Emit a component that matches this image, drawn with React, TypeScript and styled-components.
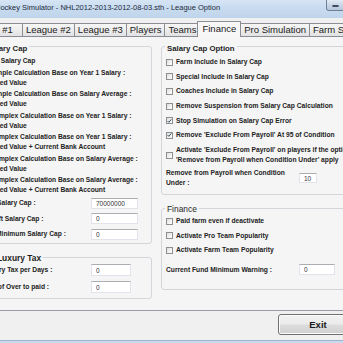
import React from 'react';
import styled, { createGlobalStyle, css } from 'styled-components';

const GlobalStyle = createGlobalStyle`
  html, body {
    margin: 0;
    padding: 0;
    background: #f0f0f0;
  }
  body {
    font-family: "Liberation Sans", Arial, sans-serif;
    color: #1e1e1e;
  }
  * {
    box-sizing: border-box;
  }
`;

const Window = styled.div`
  width: 343px;
  height: 343px;
  overflow: hidden;
  display: flex;
  flex-direction: column;
  background: #f0f0f0;
`;

const TitleBar = styled.div`
  flex: none;
  height: 18px;
  display: flex;
  justify-content: space-between;
  align-items: flex-start;
  background: linear-gradient(180deg, #d6e5f5 0%, #c8dbef 45%, #bfd4eb 100%);
`;

const Title = styled.span`
  margin-left: -5px;
  font-size: 7.5px;
  line-height: 16px;
  color: #1c2a3c;
  white-space: nowrap;
`;

const MinButton = styled.div`
  flex: none;
  width: 24px;
  height: 11px;
  margin-right: -7px;
  border: 1px solid #6f8198;
  border-top: none;
  border-radius: 0 0 3px 3px;
  background: linear-gradient(180deg, #e3ebf5 0%, #c9d6e6 50%, #b7c8dc 100%);
  display: flex;
  align-items: center;
  padding-left: 5px;
`;

const MinDash = styled.div`
  width: 7px;
  height: 2px;
  margin-top: 2px;
  background: #fff;
  border: 1px solid #3b4a5e;
  border-radius: 1px;
`;

const TabStrip = styled.div`
  flex: none;
  height: 15px;
  margin-top: 3px;
  margin-left: -36px;
  display: flex;
  align-items: flex-end;
`;

const Tab = styled.div<{ $active?: boolean }>`
  flex: none;
  height: 13px;
  padding: 0 3px;
  margin-right: -1px;
  border: 1px solid #8c8e94;
  border-bottom: none;
  background: linear-gradient(180deg, #f6f6f6 0%, #ededed 50%, #e2e2e2 100%);
  font-size: 9.5px;
  line-height: 12px;
  color: #1a1a1a;
  white-space: nowrap;
  &:first-child {
    padding-right: 9px;
  }
  ${({ $active }) =>
    $active &&
    css`
      position: relative;
      z-index: 2;
      height: 16px;
      margin: 0 -1px -1px -2px;
      padding: 0 4px;
      line-height: 13px;
      background: #f7f7f7;
    `}
`;

const Panel = styled.div`
  flex: none;
  height: 275px;
  border-top: 1px solid #898c95;
  border-bottom: 1px solid #9a9ca3;
  background: #f5f5f5;
  display: flex;
  align-items: flex-start;
`;

const LeftColumn = styled.div`
  flex: none;
  width: 178px;
  margin-left: -26px;
  display: flex;
  flex-direction: column;
`;

const RightColumn = styled.div`
  flex: none;
  width: 200px;
  margin-left: 9px;
  display: flex;
  flex-direction: column;
`;

const Group = styled.fieldset<{ $top: number; $bottom: number }>`
  margin: ${({ $top }) => $top}px 0 0 0;
  padding: 0 0 ${({ $bottom }) => $bottom}px 0;
  min-width: 0;
  border: 1px solid #d2d6da;
  border-radius: 3px;
  display: flex;
  flex-direction: column;
`;

const Legend = styled.legend<{ $indent: number; $big?: boolean; $bold?: boolean }>`
  margin-left: ${({ $indent }) => $indent}px;
  padding: ${({ $big }) => ($big ? '2px' : '5px')} 2px 0;
  font-size: ${({ $big }) => ($big ? '8.4px' : '7.8px')};
  font-weight: ${({ $bold }) => ($bold ? 700 : 400)};
  line-height: ${({ $big }) => ($big ? '10px' : '9px')};
  color: #1e1e1e;
  white-space: nowrap;
`;

const Stack = styled.div<{ $top: number; $gap: number }>`
  margin-top: ${({ $top }) => $top}px;
  display: flex;
  flex-direction: column;
  gap: ${({ $gap }) => $gap}px;
`;

const OptionRow = styled.div`
  display: flex;
  align-items: center;
  gap: 3px;
  padding-left: 4px;
`;

const RadioDot = styled.span`
  flex: none;
  width: 8px;
  height: 8px;
  border: 1px solid #8e8f8f;
  border-radius: 50%;
  background: linear-gradient(180deg, #e6e6e6, #ffffff);
`;

const Box = styled.span`
  flex: none;
  width: 7px;
  height: 7px;
  border: 1px solid #8e8f8f;
  background: linear-gradient(135deg, #dcdcdc 0%, #f4f4f4 60%, #ffffff 100%);
  display: flex;
  align-items: center;
  justify-content: center;
`;

const Label = styled.span<{ $indent?: number; $width?: number }>`
  margin-left: ${({ $indent }) => $indent ?? 0}px;
  ${({ $width }) => ($width ? `width: ${$width}px;` : 'white-space: nowrap;')}
  font-size: 6.7px;
  font-weight: 700;
  line-height: 10px;
  color: #222;
`;

const FieldRow = styled.div<{ $labelWidth: number; $inputWidth: number; $height: number }>`
  display: grid;
  grid-template-columns: ${({ $labelWidth, $inputWidth }) => `${$labelWidth}px ${$inputWidth}px`};
  align-items: center;
  min-height: ${({ $height }) => $height}px;
`;

const ValueBox = styled.input<{ $h: number }>`
  width: 100%;
  height: ${({ $h }) => $h}px;
  margin: 0;
  padding: 0 0 0 4px;
  border: 1px solid #e2e3ea;
  border-top-color: #abadb3;
  background: #fff;
  font-family: "Liberation Sans", Arial, sans-serif;
  font-size: 6.5px;
  color: #333;
  outline: none;
`;

const Footer = styled.div`
  flex: none;
  height: 29px;
  display: flex;
  justify-content: flex-end;
  align-items: flex-start;
  padding-top: 3px;
  margin-right: -15px;
`;

const Button = styled.button`
  width: 80px;
  height: 21px;
  border: 1px solid #707070;
  border-radius: 3px;
  background: linear-gradient(180deg, #f2f2f2 0%, #ebebeb 48%, #dddddd 52%, #cfcfcf 100%);
  box-shadow: inset 0 0 0 1px #fcfcfc;
  font-family: "Liberation Sans", Arial, sans-serif;
  font-size: 9.5px;
  font-weight: 700;
  color: #1a1a1a;
  padding: 0;
`;

const BottomFrame = styled.div`
  flex: 1;
  border-top: 1px solid #9fb4cc;
  background: #c9daee;
`;

const Check = () => (
  <svg width="6" height="6" viewBox="0 0 6 6">
    <path d="M0.8 3.1 L2.3 4.6 L5.2 1" fill="none" stroke="#2b3a4f" strokeWidth="1.1" />
  </svg>
);

const CheckOption = ({ text, checked, width }: { text: string; checked?: boolean; width?: number }) => (
  <OptionRow>
    <Box>{checked && <Check />}</Box>
    <Label $width={width}>{text}</Label>
  </OptionRow>
);

const RadioOption = ({ children }: { children: React.ReactNode }) => (
  <OptionRow>
    <RadioDot />
    <Label>{children}</Label>
  </OptionRow>
);

const calcOptions = [
  ['Simple Calculation Base on Year 1 Salary :', 'Fixed Value'],
  ['Simple Calculation Base on Salary Average :', 'Fixed Value'],
  ['Complex Calculation Base on Year 1 Salary :', 'Fixed Value'],
  ['Complex Calculation Base on Year 1 Salary :', 'Fixed Value + Current Bank Account'],
  ['Complex Calculation Base on Salary Average :', 'Fixed Value'],
  ['Complex Calculation Base on Salary Average :', 'Fixed Value + Current Bank Account'],
];

const capFields = [
  { label: 'Hard Salary Cap :', indent: 5, value: '70000000' },
  { label: 'Soft Salary Cap :', indent: 15, value: '0' },
  { label: 'Minimum Salary Cap :', indent: 21, value: '0' },
];

const capOptions = [
  { text: 'Farm Include in Salary Cap' },
  { text: 'Special Include in Salary Cap' },
  { text: 'Coaches Include in Salary Cap' },
  { text: 'Remove Suspension from Salary Cap Calculation' },
  { text: 'Stop Simulation on Salary Cap Error', checked: true },
  { text: "Remove 'Exclude From Payroll' At 95 of Condition", checked: true },
];

const financeOptions = ['Paid farm even if deactivate', 'Activate Pro Team Popularity', 'Activate Farm Team Popularity'];

const tabs = ['League #1', 'League #2', 'League #3', 'Players', 'Teams', 'Finance', 'Pro Simulation', 'Farm Simulation'];

export default function App() {
  return (
    <>
      <GlobalStyle />
      <Window>
        <TitleBar>
          <Title>Hockey Simulator - NHL2012-2013-2012-08-03.sth - League Option</Title>
          <MinButton>
            <MinDash />
          </MinButton>
        </TitleBar>

        <TabStrip>
          {tabs.map((t) => (
            <Tab key={t} $active={t === 'Finance'}>
              {t}
            </Tab>
          ))}
        </TabStrip>

        <Panel>
          <LeftColumn>
            <Group $top={2} $bottom={3}>
              <Legend $indent={10} $bold>
                Salary Cap
              </Legend>
              <Stack $top={3} $gap={1.5}>
                <RadioOption>No Salary Cap</RadioOption>
                {calcOptions.map(([a, b], i) => (
                  <RadioOption key={i}>
                    {a}
                    <br />
                    {b}
                  </RadioOption>
                ))}
              </Stack>
              <Stack $top={2.5} $gap={4.5}>
                {capFields.map((f) => (
                  <FieldRow key={f.label} $labelWidth={116} $inputWidth={47} $height={11}>
                    <Label $indent={f.indent}>{f.label}</Label>
                    <ValueBox readOnly value={f.value} $h={11} />
                  </FieldRow>
                ))}
              </Stack>
            </Group>

            <Group $top={7.5} $bottom={5}>
              <Legend $indent={20} $big $bold>
                Luxury Tax
              </Legend>
              <Stack $top={1} $gap={5}>
                <FieldRow $labelWidth={116} $inputWidth={40} $height={12}>
                  <Label $indent={8}>Luxury Tax per Days :</Label>
                  <ValueBox readOnly value="0" $h={12} />
                </FieldRow>
                <FieldRow $labelWidth={116} $inputWidth={40} $height={12}>
                  <Label $indent={15}>% of Over to paid :</Label>
                  <ValueBox readOnly value="0" $h={12} />
                </FieldRow>
              </Stack>
            </Group>
          </LeftColumn>

          <RightColumn>
            <Group $top={2} $bottom={6}>
              <Legend $indent={3} $bold>
                Salary Cap Option
              </Legend>
              <Stack $top={4} $gap={4.7}>
                {capOptions.map((o) => (
                  <CheckOption key={o.text} text={o.text} checked={o.checked} />
                ))}
                <CheckOption
                  text="Activate 'Exclude From Payroll' on players if the option 'Remove from Payroll when Condition Under' apply"
                  width={185}
                />
              </Stack>
              <Stack $top={3} $gap={0}>
                <FieldRow $labelWidth={137} $inputWidth={18} $height={20}>
                  <Label $indent={4} $width={126}>
                    Remove from Payroll when Condition Under :
                  </Label>
                  <ValueBox readOnly value="10" $h={10} />
                </FieldRow>
              </Stack>
            </Group>

            <Group $top={7} $bottom={14}>
              <Legend $indent={3} $big>
                Finance
              </Legend>
              <Stack $top={2} $gap={4.5}>
                {financeOptions.map((t) => (
                  <CheckOption key={t} text={t} />
                ))}
              </Stack>
              <Stack $top={9} $gap={0}>
                <FieldRow $labelWidth={137} $inputWidth={36} $height={11}>
                  <Label $indent={4}>Current Fund Minimum Warning :</Label>
                  <ValueBox readOnly value="0" $h={11} />
                </FieldRow>
              </Stack>
            </Group>
          </RightColumn>
        </Panel>

        <Footer>
          <Button>Exit</Button>
        </Footer>
        <BottomFrame />
      </Window>
    </>
  );
}
